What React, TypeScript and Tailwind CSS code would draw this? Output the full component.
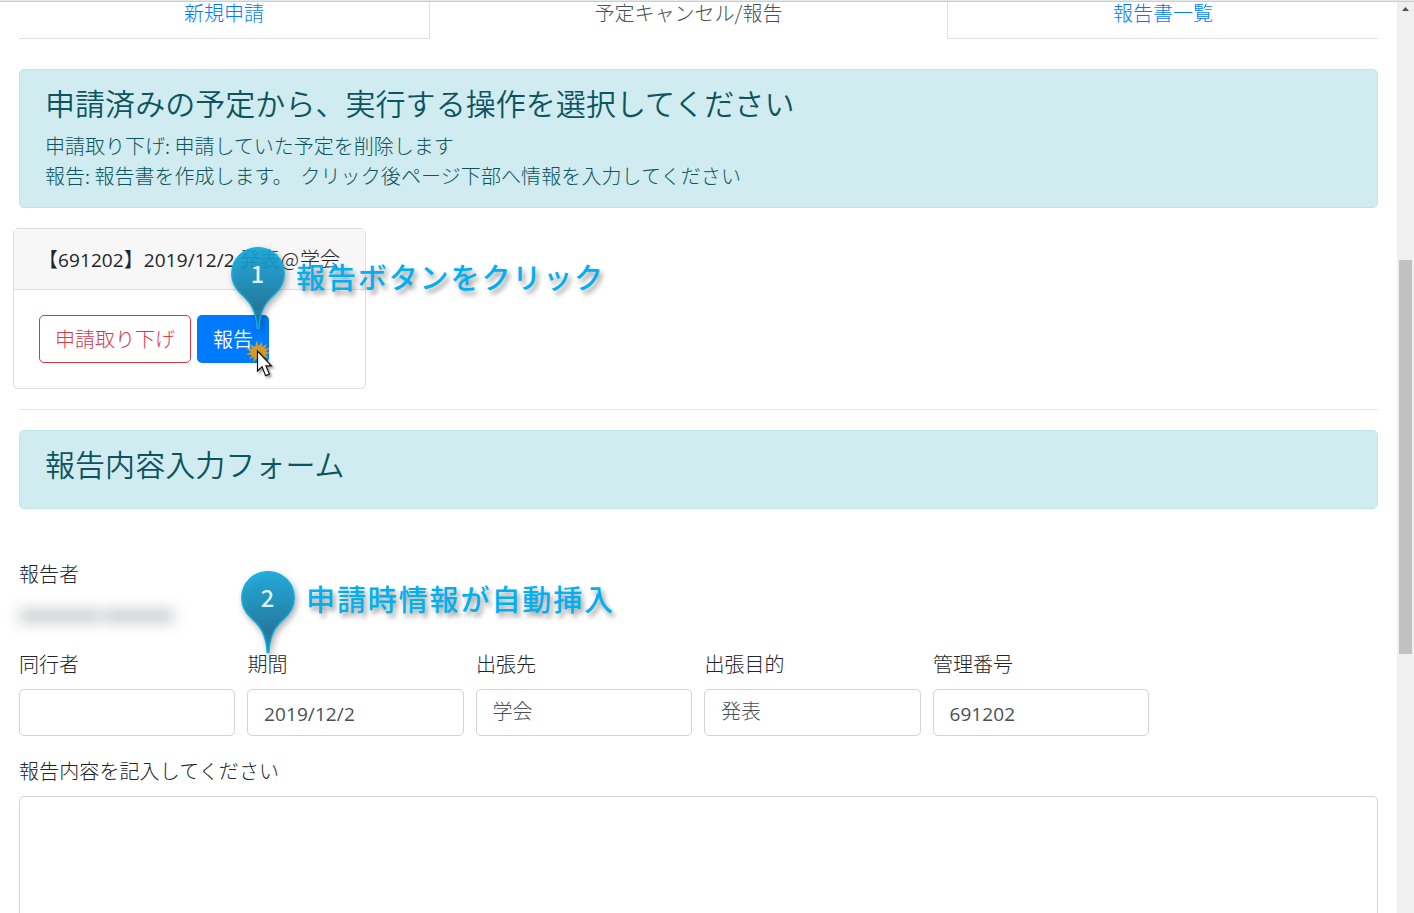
import type { ReactNode } from 'react';

const fields = [
  { label: '同行者', value: '' },
  { label: '期間', value: '2019/12/2', latin: true },
  { label: '出張先', value: '学会' },
  { label: '出張目的', value: '発表' },
  { label: '管理番号', value: '691202', latin: true },
];

const Latin = ({ children }: { children: ReactNode }) => (
  <span className="font-['Open_Sans'] text-[19px] font-normal tracking-[0.100px]">{children}</span>
);

const Alert = ({ title, children }: { title: string; children?: ReactNode }) => (
  <div className="h-full rounded-[5px] border border-[#bee5eb] bg-[#d1ecf1] px-[25px] pt-[14px] text-[#0c5460]">
    <h4 className="mb-[11px] text-[30px] leading-[36px] font-[350] tracking-[0.050px]">{title}</h4>
    {children}
  </div>
);

const Pin = ({ id, number }: { id: string; number: string }) => (
  <svg
    width="70"
    height="96"
    viewBox="0 0 70 96"
    className="shrink-0 overflow-visible drop-shadow-[2px_3px_3px_rgba(0,0,0,0.35)]"
  >
    <defs>
      <linearGradient id={id} x1="0" y1="0" x2="0" y2="1">
        <stop offset="0" stopColor="#12a6da" />
        <stop offset="0.35" stopColor="#1591c0" />
        <stop offset="0.75" stopColor="#147298" />
        <stop offset="1" stopColor="#1b86b0" />
      </linearGradient>
    </defs>
    <path
      d="M27 .7C12.300 .7.700 12.200.700 27c0 8.500 3.800 15 9.800 20.600C19.500 55.500 24.800 63 26.200 81.500h1.700C29.200 63 34.500 55.500 43.500 47.600 49.500 42 53.300 35.500 53.300 27 53.300 12.200 41.700.7 27 .7z"
      fill={`url(#${id})`}
      fillOpacity="0.9"
      stroke="#0fb0e4"
      strokeWidth="1.300"
    />
    <text
      x="26.500"
      y="36"
      textAnchor="middle"
      fill="#d9f3fa"
      className="font-['Noto_Sans_CJK_JP'] text-[24px] font-medium"
    >
      {number}
    </text>
  </svg>
);

const CalloutText = ({ children }: { children: ReactNode }) => (
  <span className="whitespace-nowrap text-[29px] leading-[40px] font-medium tracking-[1.900px] text-[#00b0f0] [text-shadow:3px_4px_5px_rgba(0,0,0,0.4)]">
    {children}
  </span>
);

const ClickCursor = () => (
  <svg width="36" height="42" viewBox="0 0 36 42" className="overflow-visible">
    <path
      d="M12 0l1.500 6L17 1.500l.3 5.300L22 4l-2.300 4.700 5-.7-4 3.500 4.300 1.500-4.500 1.500 3.500 3.500-5-.8.500 4-3.500-3-1.500 4.300-2-4.500L8.500 22l.3-5L4 19l3-4-6-.5 5-2.500L1 8.500l6 .3L5 4l5 3z"
      fill="#d29a2c"
    />
    <path
      d="M12.500 11v20l4.600-4.300 3.500 9 3.800-1.600-3.500-8.300h5.500z"
      fill="#fff"
      stroke="#111"
      strokeWidth="1.200"
      className="drop-shadow-[2px_2px_1px_rgba(0,0,0,0.35)]"
    />
  </svg>
);

const App = () => {
  return (
    <div className="relative flex h-[913px] w-[1414px] overflow-hidden bg-white font-['Noto_Sans_CJK_JP',sans-serif] text-[20px] leading-[30px] font-light text-[#212529]">
      <div className="absolute inset-x-0 top-0 h-[2px] border-b border-[#cbcdce] bg-[#e6e9eb]" />

      <main className="w-[1397px] pr-[19px] pl-[19px]">
        <nav className="flex h-[39px] text-center leading-[26px] text-[#007bff]">
          <a className="w-[411px] border-r border-b border-[#dee2e6]">新規申請</a>
          <a className="w-[517px] text-[#495057]">予定キャンセル/報告</a>
          <a className="w-[431px] border-b border-l border-[#dee2e6]">報告書一覧</a>
        </nav>

        <div className="mt-[30px] h-[139px]">
          <Alert title="申請済みの予定から、実行する操作を選択してください">
            <p>申請取り下げ: 申請していた予定を削除します</p>
            <p>
              報告: 報告書を作成します。
              <span className="ml-[8px] tracking-[0.100px]">クリック後ページ下部へ情報を入力してください</span>
            </p>
          </Alert>
        </div>

        <div className="mt-[20px] -ml-[6px] h-[161px] w-[353px] rounded-[5px] border border-[#dfdfdf]">
          <div className="h-[61px] border-b border-[#dfdfdf] bg-[#f7f7f7] pt-[15px] pl-[24px] whitespace-nowrap">
            【<Latin>691202</Latin>】<Latin>2019/12/2 </Latin>発表
            <span className="mx-px">@</span>学会
          </div>
          <div className="flex gap-[6px] pt-[25px] pl-[25px]">
            <button className="h-[48px] w-[152px] rounded-[5px] border border-[#dc3545] text-[#dc3545]">
              申請取り下げ
            </button>
            <button className="h-[48px] w-[72px] rounded-[5px] bg-[#007bff] font-[350] text-white">報告</button>
          </div>
        </div>

        <hr className="mt-[20px] mb-[20px] border-[#e5e5e5]" />

        <div className="h-[79px]">
          <Alert title="報告内容入力フォーム" />
        </div>

        <div className="mt-[50px] h-[90px]">
          <div>報告者</div>
          <div className="mt-[20px] flex gap-[3px] opacity-35 blur-[7px]">
            <div className="h-[14px] w-[82px] bg-[#6c757d]" />
            <div className="h-[14px] w-[70px] bg-[#6c757d]" />
          </div>
        </div>

        <div className="flex gap-[12.300px]">
          {fields.map((field) => (
            <div key={field.label} className="w-[216.200px]">
              <label className="block">{field.label}</label>
              <div className="mt-[10px] h-[47px] rounded-[5px] border border-[#ced4da] pl-[15.500px] leading-[44px] text-[#495057]">
                {field.latin ? (
                  <span className="relative top-px">
                    <Latin>{field.value}</Latin>
                  </span>
                ) : (
                  <span className="relative -top-px">{field.value}</span>
                )}
              </div>
            </div>
          ))}
        </div>

        <div className="mt-[20px]">
          <label className="block tracking-[0.100px]">報告内容を記入してください</label>
          <div className="mt-[10px] h-[200px] rounded-[5px] border border-[#ced4da]" />
        </div>
      </main>

      <aside className="w-[17px] bg-[#f0f0f0]">
        <svg width="17" height="17" viewBox="0 0 17 17" className="block">
          <path d="M5 11h7L8.500 7z" fill="#505050" />
        </svg>
        <div className="mx-[2px] mt-[243px] h-[394px] bg-[#c1c1c1]" />
      </aside>

      {/* Step callouts */}
      <div className="absolute top-[247px] left-[231px] flex">
        <Pin id="pin1" number="1" />
        <div className="-ml-[5px] pt-[9px]">
          <CalloutText>報告ボタンをクリック</CalloutText>
        </div>
      </div>
      <div className="absolute top-[340px] left-[245px]">
        <ClickCursor />
      </div>
      <div className="absolute top-[571px] left-[241px] flex">
        <Pin id="pin2" number="2" />
        <div className="-ml-[5px] pt-[7px]">
          <CalloutText>申請時情報が自動挿入</CalloutText>
        </div>
      </div>
    </div>
  );
};

export default App;
